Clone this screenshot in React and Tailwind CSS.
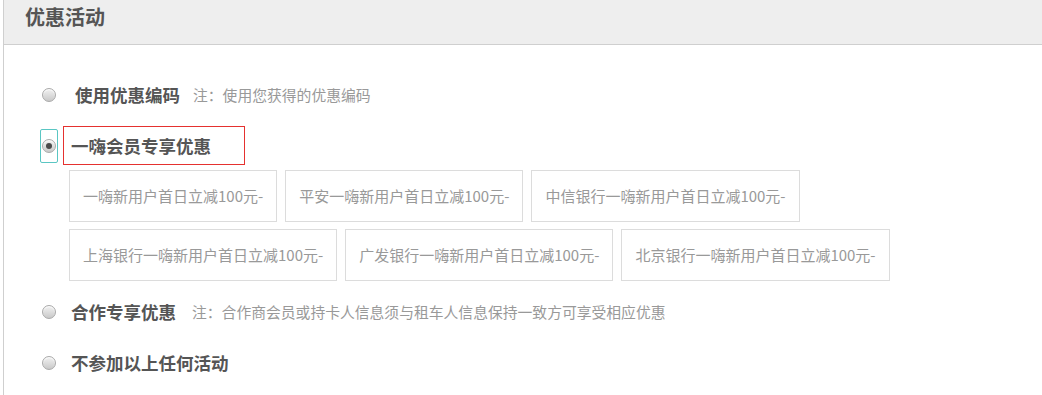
import React from "react";

const font = { fontFamily: '"Noto Sans CJK SC", "Microsoft YaHei", sans-serif' };

function Radio({ checked }) {
  return (
    <span className="relative block h-[14px] w-[14px] shrink-0 rounded-full border border-[#a9a9a9] bg-gradient-to-b from-[#f2f2f2] to-[#c9c9c9] shadow-[inset_0_1px_1px_rgba(255,255,255,0.9)]">
      {checked && (
        <span className="absolute left-1/2 top-1/2 h-[6px] w-[6px] -translate-x-1/2 -translate-y-1/2 rounded-full bg-[#4a4a4a]" />
      )}
    </span>
  );
}

const coupons1 = ["一嗨新用户首日立减100元-", "平安一嗨新用户首日立减100元-", "中信银行一嗨新用户首日立减100元-"];
const coupons2 = ["上海银行一嗨新用户首日立减100元-", "广发银行一嗨新用户首日立减100元-", "北京银行一嗨新用户首日立减100元-"];

function Coupon({ text }) {
  return (
    <div className="flex h-[52px] items-center border border-[#dcdcdc] bg-white px-[13px] text-[15px] leading-[20px] text-[#999]">
      {text}
    </div>
  );
}

export default function App() {
  return (
    <div className="h-[395px] w-[1042px] overflow-hidden bg-white" style={font}>
      <div className="ml-[3px] h-full border-l border-[#cfcfcf]">
        <div className="h-[45px] border-b border-[#cfcfcf] bg-[#eeeeee] pl-[21px] pt-[7px]">
          <div className="text-[20px] font-bold leading-[20px] text-[#555]">优惠活动</div>
        </div>

        <div className="pl-[38px] pt-[31px]">
          {/* row 1 */}
          <div className="flex h-[38px] items-center">
            <Radio />
            <span className="ml-[19px] text-[17.5px] font-bold leading-[20px] text-[#555]">使用优惠编码</span>
            <span className="ml-[13px] text-[14.8px] leading-[20px] text-[#999]">注：使用您获得的优惠编码</span>
          </div>

          {/* row 2 */}
          <div className="mt-[12px] flex h-[39px] items-center">
            <span className="relative">
              <Radio checked />
              <span className="absolute left-[-2px] top-[-10px] h-[34px] w-[18px] rounded-[2px] border border-[#5ac6c3]" />
            </span>
            <div className="ml-[7px] flex h-[39px] w-[182px] items-center border border-[#e5312f] pl-[7px]">
              <span className="text-[17.5px] font-bold leading-[20px] text-[#555]">一嗨会员专享优惠</span>
            </div>
          </div>

          {/* coupons */}
          <div className="ml-[27px] mt-[5px] flex flex-col gap-[7px]">
            <div className="flex gap-[8px]">
              {coupons1.map((c) => (
                <Coupon key={c} text={c} />
              ))}
            </div>
            <div className="flex gap-[8px]">
              {coupons2.map((c) => (
                <Coupon key={c} text={c} />
              ))}
            </div>
          </div>

          {/* row 3 */}
          <div className="mt-[12px] flex h-[38px] items-center">
            <Radio />
            <span className="ml-[15px] text-[17.5px] font-bold leading-[20px] text-[#555]">合作专享优惠</span>
            <span className="ml-[16px] text-[14.8px] leading-[20px] text-[#999]">
              注：合作商会员或持卡人信息须与租车人信息保持一致方可享受相应优惠
            </span>
          </div>

          {/* row 4 */}
          <div className="mt-[13px] flex h-[38px] items-center">
            <Radio />
            <span className="ml-[15px] text-[17.5px] font-bold leading-[20px] text-[#555]">不参加以上任何活动</span>
          </div>
        </div>
      </div>
    </div>
  );
}
